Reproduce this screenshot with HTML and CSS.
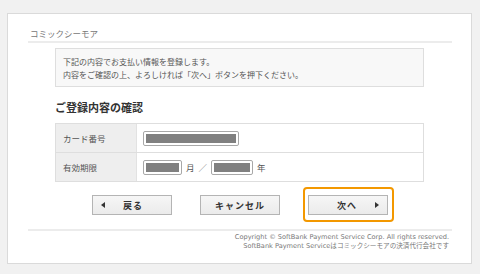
FILE: index.html
```html
<!DOCTYPE html>
<html lang="ja">
<head>
<meta charset="utf-8">
<title>コミックシーモア</title>
<link rel="stylesheet" href="styles.css">
</head>
<body>
<div class="panel">
  <div class="title">コミックシーモア</div>
  <div class="inner">
    <div class="info">
      <p>下記の内容でお支払い情報を登録します。</p>
      <p>内容をご確認の上、よろしければ「次へ」ボタンを押下ください。</p>
    </div>
    <h2 class="heading">ご登録内容の確認</h2>
    <div class="table">
      <div class="row">
        <div class="label">カード番号</div>
        <div class="value"><span class="field field-card"><span class="fill"></span></span></div>
      </div>
      <div class="row">
        <div class="label">有効期限</div>
        <div class="value">
          <span class="field field-month"><span class="fill"></span></span>
          <span class="unit">月</span>
          <span class="slash">／</span>
          <span class="field field-year"><span class="fill"></span></span>
          <span class="unit">年</span>
        </div>
      </div>
    </div>
  </div>
  <div class="buttons">
    <div class="btn btn-back"><span class="tri tri-left"></span><span class="btn-label">戻る</span></div>
    <div class="btn btn-cancel"><span class="btn-label">キャンセル</span></div>
    <div class="highlight">
      <div class="btn btn-next"><span class="btn-label">次へ</span><span class="tri tri-right"></span></div>
    </div>
  </div>
  <div class="footer">
    <p>Copyright © SoftBank Payment Service Corp. All rights reserved.</p>
    <p>SoftBank Payment Serviceはコミックシーモアの決済代行会社です</p>
  </div>
</div>
</body>
</html>
```
FILE: styles.css
```css
html, body {
  margin: 0;
  padding: 0;
}
body {
  background: #f1f1f1;
  font-family: "Noto Sans CJK JP", "Noto Sans", sans-serif;
  color: #555;
  width: 480px;
  height: 274px;
  overflow: hidden;
}
.panel {
  margin: 13px 8px 0 7px;
  height: 249px;
  border: 1px solid #dadada;
  background: #fff;
  padding: 0 19px 0 20px;
}
.title {
  padding-top: 12px;
  padding-left: 2px;
  line-height: 14px;
  height: 15px;
  font-size: 8.5px;
  color: #777;
  border-bottom: 2px solid #ececec;
}
.inner {
  width: 369px;
  margin-left: 27px;
}
.info {
  margin-top: 5px;
  border: 1px solid #dedede;
  background: #f8f8f8;
  padding: 6px 7px 5px;
  font-size: 8px;
  line-height: 13px;
  color: #555;
}
.info p {
  margin: 0;
}
.heading {
  margin: 12px 0 8px;
  font-size: 11px;
  line-height: 16px;
  font-weight: bold;
  color: #333;
}
.table {
  border: 1px solid #dedede;
}
.row {
  display: grid;
  grid-template-columns: 81px 1fr;
  height: 28px;
}
.row + .row {
  border-top: 1px solid #dedede;
}
.label {
  background: #eeeeee;
  border-right: 1px solid #e2e2e2;
  padding-left: 7px;
  font-size: 8.5px;
  color: #555;
  display: flex;
  align-items: center;
}
.value {
  display: flex;
  align-items: center;
  padding-left: 6px;
  font-size: 8.5px;
  color: #555;
}
.field {
  display: inline-block;
  box-sizing: border-box;
  height: 15px;
  border: 1px solid #a8a8a8;
  border-radius: 2px;
  padding: 2px;
  background: #fff;
}
.fill {
  display: block;
  height: 100%;
  background: #808080;
}
.field-card { width: 96px; }
.field-month { width: 39px; }
.field-year { width: 42px; }
.unit {
  margin-left: 4px;
}
.slash {
  margin: 0 4px 0 4px;
  color: #777;
}
.buttons {
  margin-top: 13px;
  display: flex;
  justify-content: center;
  gap: 28px;
  padding-left: 0;
}
.btn {
  box-sizing: border-box;
  width: 80px;
  height: 20px;
  border: 1px solid #b4b4b4;
  background: linear-gradient(#f6f6f6, #ebebeb);
  display: flex;
  align-items: center;
  justify-content: center;
  position: relative;
  font-size: 9px;
  font-weight: bold;
  color: #333;
}
.btn-label {
  letter-spacing: 1px;
}
.tri {
  position: absolute;
  top: 50%;
  width: 0;
  height: 0;
  border-top: 3px solid transparent;
  border-bottom: 3px solid transparent;
  margin-top: -3px;
}
.tri-left {
  left: 8px;
  border-right: 4px solid #333;
}
.tri-right {
  right: 8px;
  border-left: 4px solid #333;
}
.btn-back .btn-label { margin-left: 2px; }
.btn-next .btn-label { margin-right: 2px; }
.highlight {
  position: relative;
}
.highlight::after {
  content: "";
  position: absolute;
  top: -8px;
  bottom: -7px;
  left: -5px;
  right: -6px;
  border: 2px solid #f39800;
  border-radius: 4px;
}
.footer {
  margin-top: 14px;
  border-top: 2px solid #ececec;
  padding: 2px 3px 0 0;
  text-align: right;
  font-family: "DejaVu Sans", "Noto Sans CJK JP", sans-serif;
  font-size: 6.6px;
  line-height: 9px;
  color: #777;
}
.footer p {
  margin: 0;
}
```
